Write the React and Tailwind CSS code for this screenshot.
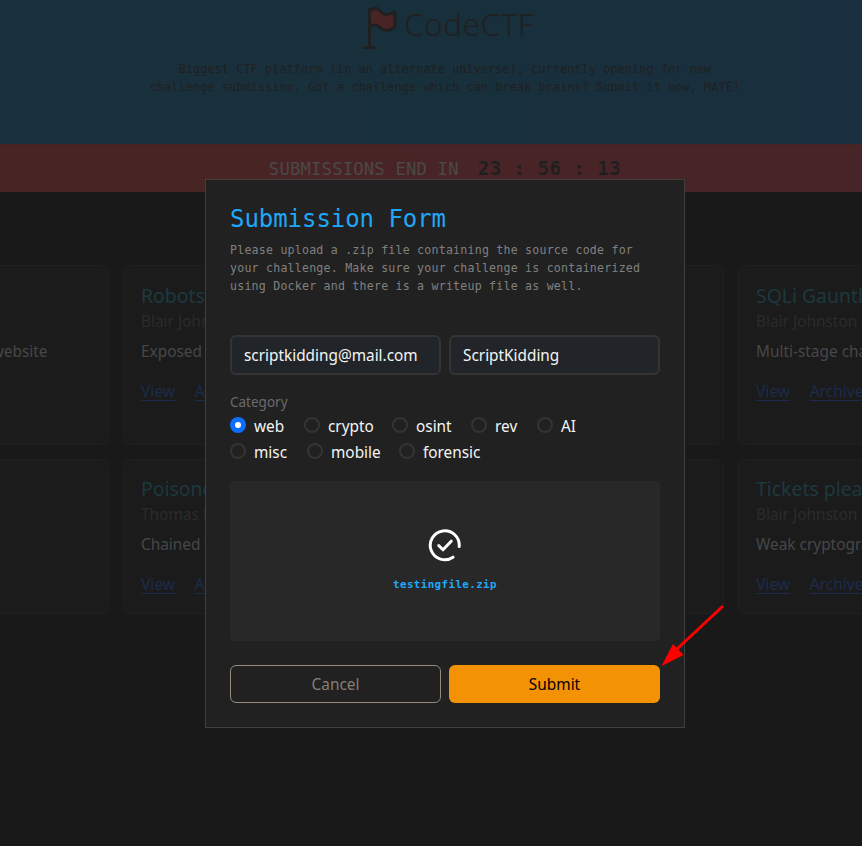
const topCards = [
  { id: "a", text: "website", trailing: true },
  { id: "b", title: "Robots", author: "Blair Johnston", text: "Exposed", links: true },
  { id: "c" },
  { id: "d", title: "SQLi Gauntlet", author: "Blair Johnston", text: "Multi-stage challenge", links: true },
];
const bottomCards = [
  { id: "e" },
  { id: "f", title: "Poisoned", author: "Thomas D", text: "Chained vectors", links: true },
  { id: "g" },
  { id: "h", title: "Tickets please", author: "Blair Johnston", text: "Weak cryptography", links: true },
];

const mono = "font-['DejaVu_Sans_Mono',monospace]";

function Card({ card, titleClass }) {
  return (
    <div className="w-[293.5px] shrink-0 overflow-hidden whitespace-nowrap rounded-lg border border-[#202020] bg-[#1b1b1b] px-[17px]">
      <h2 className={`text-[19.4px] text-[#1b393f] ${titleClass}`}>{card.title}</h2>
      <p className="h-6 text-[15.4px] leading-6 text-[#2b2b2b]">{card.author}</p>
      <p className={`mt-[6px] text-[15.4px] leading-6 text-[#474747] ${card.trailing ? "w-[214px] text-right" : ""}`}>{card.text}</p>
      {card.links && (
        <div className="mt-[15px] flex gap-[19.5px] text-[15.6px] leading-6 text-[#1b2b4b] underline decoration-1 underline-offset-[3px]">
          <span>View</span>
          <span>Archive</span>
        </div>
      )}
    </div>
  );
}

function Radio({ label, checked, className }) {
  return (
    <div className={`flex h-[26px] items-center ${className}`}>
      {checked ? (
        <span className="flex size-4 items-center justify-center rounded-full bg-[#0d6efd]">
          <span className="size-[6px] rounded-full bg-white" />
        </span>
      ) : (
        <span className="size-4 rounded-full border-2 border-[#343434]" />
      )}
      <span className="ml-2 pt-[2px] text-[15.35px] leading-6 text-[#f4f4f4]">{label}</span>
    </div>
  );
}

function Modal() {
  return (
    <div className="absolute left-[205px] top-[179px] h-[549px] w-[480px] border border-[#404040] bg-[#212121] px-6 pt-[21px]">
      <h2 className={`${mono} text-[24px] leading-9 tracking-[-0.05px] text-[#1fa8f8]`}>Submission Form</h2>
      <p className={`${mono} mt-1 whitespace-nowrap text-[11.6px] leading-[18px] tracking-[0.217px] text-[#808080]`}>
        Please upload a .zip file containing the source code for
        <br />
        your challenge. Make sure your challenge is containerized
        <br />
        using Docker and there is a writeup file as well.
      </p>
      <div className="mt-10 grid grid-cols-2 gap-2 text-[15.35px] text-[#f4f4f4]">
        <div className="h-10 rounded-md border-2 border-[#343434] bg-[#212529] px-3 leading-[37px]">scriptkidding@mail.com</div>
        <div className="h-10 rounded-md border-2 border-[#343434] bg-[#212529] px-3 leading-[37px]">ScriptKidding</div>
      </div>
      <p className="mt-[17px] text-[13.5px] leading-5 text-[#6a6a6a]">Category</p>
      <div className="flex">
        <Radio label="web" checked className="w-[74px]" />
        <Radio label="crypto" className="w-[88px]" />
        <Radio label="osint" className="w-[79px]" />
        <Radio label="rev" className="w-[66px]" />
        <Radio label="AI" className="" />
      </div>
      <div className="flex">
        <Radio label="misc" className="w-[77px]" />
        <Radio label="mobile" className="w-[92px]" />
        <Radio label="forensic" className="" />
      </div>
      <div className="mt-[17px] flex h-40 flex-col items-center rounded bg-[#282828] pt-[47px]">
        <svg width="34" height="34" viewBox="0 0 34 34" fill="none" stroke="#fff" strokeWidth="3" strokeLinecap="round" strokeLinejoin="round">
          <path d="M31.2 18.6A14.5 14.5 0 1 0 25 29.2" />
          <path d="M10.7 17.5L15 21.8L23.2 13.2" />
        </svg>
        <span className={`${mono} mt-[14px] text-[10.8px] font-bold leading-[18px] tracking-[0.42px] text-[#1fa8f8]`}>testingfile.zip</span>
      </div>
      <div className="mt-6 grid grid-cols-2 gap-2 text-[15.4px]">
        <button className="h-[38px] rounded-md border border-[#948a80] pt-px text-[#867e76]">Cancel</button>
        <button className="h-[38px] rounded-md bg-[#f39204] pt-px text-black">Submit</button>
      </div>
    </div>
  );
}

export default function App() {
  return (
    <div className="relative h-[846px] w-[862px] overflow-hidden bg-[#191919] font-['Noto_Sans',sans-serif]">
      <header className="h-36 w-[890px] bg-linear-to-r from-[#1a303d] via-[#182f3c] to-[#1a2f3f]">
        <div className="flex h-[60px] pl-[362px]">
          <svg className="mt-[6px]" width="36" height="44" viewBox="0 0 36 44" fill="none" stroke="#202020" strokeWidth="3" strokeLinecap="round" strokeLinejoin="round">
            <path fill="#482424" d="M7.5 5C11 2 15 1.500 18 4.500C21 8 24 9.500 27 8L33 6V21C27 25 23 26 18 21.500C14 17.500 11 18.500 7.500 20.500Z" />
            <path d="M7.500 3V41M3 41.500H12" />
          </svg>
          <h1 className="ml-[6px] text-[31.5px] font-light leading-[48px] tracking-[0.5px] text-[#202020]">CodeCTF</h1>
        </div>
        <p className={`${mono} whitespace-nowrap text-center text-[11.6px] leading-[18px] tracking-[0.217px] text-[#202020]`}>
          Biggest CTF platform (in an alternate universe), currently opening for new
          <br />
          challenge submission. Got a challenge which can break brains? Submit it now, MATE!
        </p>
      </header>
      <div className={`${mono} flex h-12 w-[890px] items-center justify-center whitespace-nowrap border-t border-[#402323] bg-linear-to-r from-[#482424] to-[#482428] pt-[2px]`}>
        <span className="text-[17.2px] tracking-[0.2px] text-[#4b4848]">SUBMISSIONS END IN</span>
        <span className="ml-[19px] text-[19.2px] font-bold tracking-[0.4px] text-[#202020]">23 : 56 : 13</span>
      </div>
      <main className="ml-[-184.5px] mt-[73px] flex w-[1216px] flex-col gap-[14px]">
        <div className="flex h-[180px] gap-[14px]">
          {topCards.map((card) => <Card key={card.id} card={card} titleClass="mt-[17px] h-[27px] leading-[26px]" />)}
        </div>
        <div className="flex h-[155px] gap-[14px]">
          {bottomCards.map((card) => <Card key={card.id} card={card} titleClass="mt-4 h-[27px] leading-[26px]" />)}
        </div>
      </main>
      <Modal />
      <svg className="absolute left-[655px] top-[600px]" width="75" height="72" viewBox="0 0 75 72">
        <path d="M68 6L22 49" stroke="#f00" strokeWidth="3" />
        <path d="M6.500 66L18 44L28.500 55Z" fill="#f00" />
      </svg>
    </div>
  );
}
